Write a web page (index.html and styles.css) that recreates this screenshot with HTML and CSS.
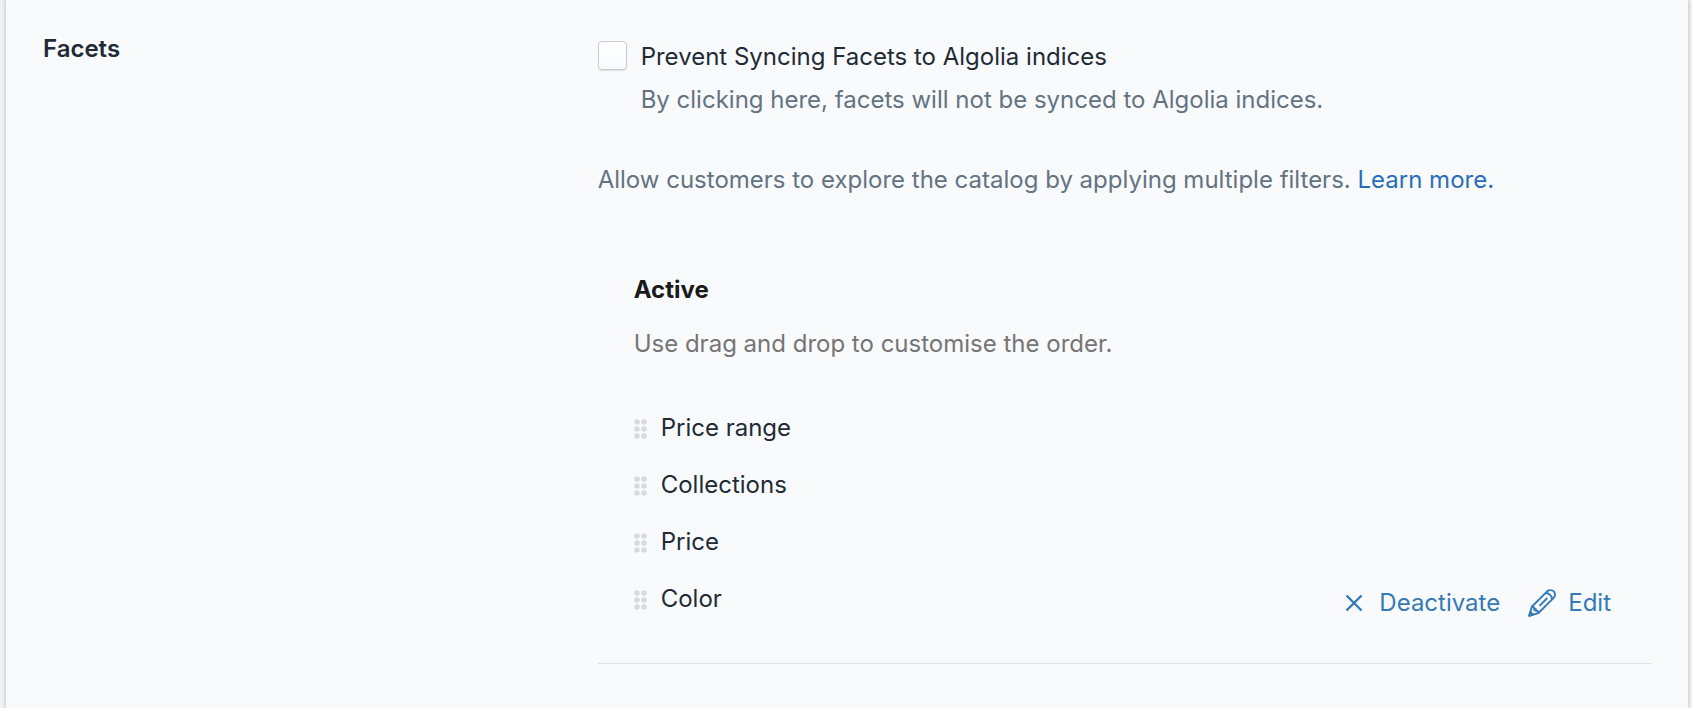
FILE: index.html
```html
<!DOCTYPE html>
<html lang="en">
<head>
    <meta charset="UTF-8">
    <meta name="viewport" content="width=device-width, initial-scale=1.0">
    <title>Facets</title>
    <link rel="stylesheet" href="styles.css">
</head>
<body>
    <svg class="sprite" width="0" height="0" aria-hidden="true">
        <symbol id="icon-grip" viewBox="0 0 14 20">
            <circle cx="3" cy="3" r="2.8"/><circle cx="10" cy="3" r="2.8"/>
            <circle cx="3" cy="10" r="2.8"/><circle cx="10" cy="10" r="2.8"/>
            <circle cx="3" cy="17" r="2.8"/><circle cx="10" cy="17" r="2.8"/>
        </symbol>
    </svg>

    <main class="panel">
        <section class="settings-row">
            <h2 class="settings-title">Facets</h2>

            <div class="settings-body">
                <div class="checkbox-field">
                    <input type="checkbox" id="preventSync" class="checkbox" aria-describedby="preventSyncHelp">
                    <div class="checkbox-text">
                        <label for="preventSync">Prevent Syncing Facets to Algolia indices</label>
                        <p id="preventSyncHelp" class="help-text">By clicking here, facets will not be synced to Algolia indices.</p>
                    </div>
                </div>

                <p class="intro">Allow customers to explore the catalog by applying multiple filters. <a href="#">Learn more.</a></p>

                <div class="facets">
                    <h3 class="facets-title">Active</h3>
                    <p class="facets-hint">Use drag and drop to customise the order.</p>

                    <ul class="facet-list">
                        <li class="facet">
                            <svg class="grip"><use href="#icon-grip"/></svg>
                            <span class="facet-name">Price range</span>
                        </li>
                        <li class="facet">
                            <svg class="grip"><use href="#icon-grip"/></svg>
                            <span class="facet-name">Collections</span>
                        </li>
                        <li class="facet">
                            <svg class="grip"><use href="#icon-grip"/></svg>
                            <span class="facet-name">Price</span>
                        </li>
                        <li class="facet">
                            <svg class="grip"><use href="#icon-grip"/></svg>
                            <span class="facet-name">Color</span>
                            <div class="facet-actions">
                                <button type="button" class="action">
                                    <svg class="icon-close" viewBox="0 0 18 18">
                                        <path d="M1.500 1.500l15 15M16.500 1.500l-15 15"/>
                                    </svg>
                                    Deactivate
                                </button>
                                <button type="button" class="action">
                                    <svg class="icon-pencil" viewBox="0 0 28 28">
                                        <path d="M4 17.500L19.200 2.300Q20.500 1.100 22.500 1.100Q24.500 1.100 25.800 2.400Q27 3.700 27 5.600Q27 7.500 25.600 8.900L10.500 24L1.200 26.800Z"/>
                                        <path d="M17.500 4Q20.300 4 22.200 5.900Q24.100 7.800 24 10.500"/>
                                        <path d="M4 17.500Q6.500 17.700 6.300 20.500Q6.200 21.700 7.500 21.600Q10.200 21.400 10.500 24M11.500 16.800L19.300 9M6.500 21.500L8.500 19.500"/>
                                        <path class="tip" d="M2.400 22.800L5.200 25.600L1.200 26.800Z"/>
                                    </svg>
                                    Edit
                                </button>
                            </div>
                        </li>
                    </ul>
                </div>
            </div>
        </section>
    </main>
</body>
</html>
```

FILE: styles.css
```css
* {
    box-sizing: border-box;
}

body {
    margin: 0;
    padding: 0 4px 0 6px;
    background: #f0f1f3;
    color: #212b36;
    font-family: Inter, "Liberation Sans", sans-serif;
    font-size: 24px;
    line-height: 32px;
}

h2, h3, p, ul {
    margin: 0;
    padding: 0;
}

a {
    color: #2a6ebb;
    text-decoration: none;
}

.sprite {
    display: block;
}

.panel {
    min-height: 100vh;
    padding: 33px 37px;
    background: #f9fafc;
    box-shadow: 0 0 4px rgba(33, 43, 54, 0.3);
}

.settings-row {
    display: grid;
    grid-template-columns: 1fr 2fr;
    gap: 28px;
}

.settings-title {
    font-size: 24px;
    font-weight: 600;
}

.settings-body {
    padding-top: 8px;
    padding-bottom: 44px;
    border-bottom: 1px solid #dfe1e5;
}

.checkbox-field {
    display: flex;
    align-items: flex-start;
    gap: 14px;
}

.checkbox {
    appearance: none;
    flex: none;
    width: 29px;
    height: 29px;
    margin: 0;
    border: 1px solid #c4cdd5;
    border-radius: 4px;
    background: linear-gradient(#fff, #f9fafb);
    box-shadow: 0 1px 1px rgba(22, 29, 37, 0.12);
}

.checkbox:checked {
    background: #2a6ebb;
}

.help-text {
    margin-top: 11px;
    color: #637381;
}

.intro {
    margin-top: 48px;
    color: #637381;
}

.facets {
    padding: 78px 40px 0 36px;
}

.facets-title {
    color: #1a1a1a;
    font-size: 24px;
    font-weight: 700;
}

.facets-hint {
    margin-top: 22px;
    color: #757575;
}

.facet-list {
    display: flex;
    flex-direction: column;
    gap: 25px;
    margin-top: 52px;
    list-style: none;
}

.facet {
    display: flex;
    align-items: flex-start;
    min-height: 32px;
}

.grip {
    flex: none;
    width: 14px;
    height: 20px;
    margin: 7px 13px 0 0;
    fill: #d5dbe1;
}

.facet-actions {
    display: flex;
    gap: 28px;
    margin-left: auto;
    padding-top: 4px;
}

.action {
    display: flex;
    align-items: center;
    gap: 12px;
    padding: 0;
    border: none;
    background: none;
    color: #337ab7;
    font: inherit;
    cursor: pointer;
}

.icon-close,
.icon-pencil {
    fill: none;
    stroke: currentColor;
    stroke-linejoin: round;
}

.icon-close {
    width: 18px;
    height: 18px;
    margin-right: 4px;
    stroke-width: 2.4;
}

.icon-pencil {
    width: 28px;
    height: 28px;
    stroke-width: 1.9;
}

.action .tip {
    fill: currentColor;
}
```
